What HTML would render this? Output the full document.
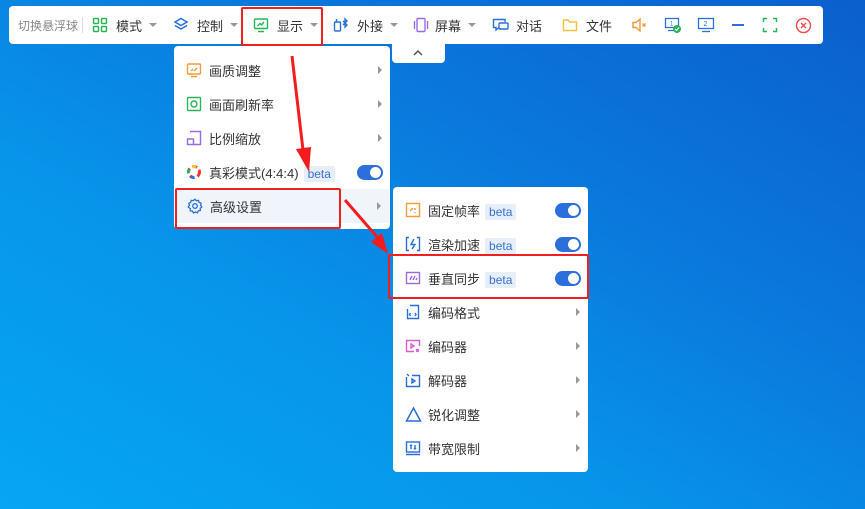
<!DOCTYPE html>
<html><head><meta charset="utf-8"><style>
*{margin:0;padding:0;box-sizing:border-box}
body{width:865px;height:509px;overflow:hidden;position:relative;font-family:"Liberation Sans","Noto Sans CJK SC",sans-serif;background:linear-gradient(30deg,#06a6f4 0%,#0795ea 35%,#0a78dc 65%,#0b5fcd 100%);}
.abs{position:absolute}
.tb{left:9px;top:6px;width:814px;height:38px;background:#fff;border-radius:4px;}
.ti{position:absolute;top:0;height:38px;display:flex;align-items:center;font-size:13px;color:#333;white-space:nowrap}
.car{display:inline-block;width:0;height:0;border-left:4px solid transparent;border-right:4px solid transparent;border-top:4px solid #999;margin-left:7px}
.menu{background:#fff;border-radius:4px}
.row{position:absolute;left:0;right:0;height:34px;display:flex;align-items:center;font-size:13px;color:#333}
.row svg{position:absolute;left:12px}
.row span.t{position:absolute;left:35px}
.arr{position:absolute;right:8px;width:0;height:0;border-top:4px solid transparent;border-bottom:4px solid transparent;border-left:4px solid #999}
.beta{display:inline-block;background:#e6eefa;color:#3a6fd0;font-size:12px;padding:1px 4px;margin-left:5px;border-radius:2px;line-height:14px}
.tg{position:absolute;right:7px;width:26px;height:15px;border-radius:8px;background:#2a6fdb}
.tg:after{content:"";position:absolute;right:2px;top:2px;width:11px;height:11px;border-radius:50%;background:#fff}
.red{position:absolute;border:2px solid #f02020;border-radius:2px}
</style></head><body>
<div class="abs tb">
 <div class="ti" style="left:9px;color:#888;font-size:12px">切换悬浮球</div>
 <div class="abs" style="left:73px;top:11px;width:1px;height:16px;background:#ddd"></div>
 <div class="ti" style="left:83px"><svg width="16" height="16" viewBox="0 0 16 16" fill="none" stroke="#2bb35a" stroke-width="1.5"><rect x="1.5" y="1.5" width="5" height="5" rx="1"/><rect x="9.5" y="1.5" width="5" height="5" rx="1"/><rect x="1.5" y="9.5" width="5" height="5" rx="1"/><rect x="9.5" y="9.5" width="5" height="5" rx="1"/></svg><span style="margin-left:8px">模式</span><i class="car"></i></div>
 <div class="ti" style="left:164px"><svg width="16" height="16" viewBox="0 0 16 16" fill="none" stroke="#2a6fdb" stroke-width="1.5"><path d="M8 1.5 14 5 8 8.5 2 5Z"/><path d="M2 8.5 8 12 14 8.5"/></svg><span style="margin-left:8px">控制</span><i class="car"></i></div>
 <div class="ti" style="left:244px"><svg width="16" height="16" viewBox="0 0 16 16" fill="none" stroke="#2bb35a" stroke-width="1.4"><rect x="1.5" y="2" width="13" height="9.5" rx="1"/><path d="M5 14.5h6M4.5 9 7 6.5 8.5 8 11 5"/></svg><span style="margin-left:8px">显示</span><i class="car"></i></div>
 <div class="ti" style="left:324px"><svg width="18" height="16" viewBox="0 0 18 16" fill="none" stroke="#2a6fdb" stroke-width="1.4"><rect x="1.5" y="5" width="6" height="9" rx="1"/><path d="M3.5 5V2M10 4l4 4-2 2V2l2 2-4 4"/></svg><span style="margin-left:6px">外接</span><i class="car"></i></div>
 <div class="ti" style="left:404px"><svg width="16" height="16" viewBox="0 0 16 16" fill="none" stroke="#9a6ce0" stroke-width="1.4"><rect x="4" y="1.5" width="8" height="13" rx="1"/><path d="M1.5 4v8M14.5 4v8"/></svg><span style="margin-left:6px">屏幕</span><i class="car"></i></div>
 <div class="ti" style="left:483px"><svg width="18" height="16" viewBox="0 0 18 16" fill="none" stroke="#2a6fdb" stroke-width="1.4"><path d="M13 5V2.5H1.5v8H4v2.5l3-2.5"/><rect x="7" y="6" width="9" height="6" rx="1"/></svg><span style="margin-left:6px">对话</span></div>
 <div class="ti" style="left:553px"><svg width="16" height="16" viewBox="0 0 16 16" fill="none" stroke="#f3c43a" stroke-width="1.4"><path d="M1.5 3h4.5l1.5 2h7v8.5h-13Z"/></svg><span style="margin-left:8px">文件</span></div>
 <div class="ti" style="left:622px"><svg width="18" height="16" viewBox="0 0 18 16" fill="none" stroke="#f39a3a" stroke-width="1.4"><path d="M2 5.5h3l4-3.5v12l-4-3.5H2Z"/><path d="M11.5 6.5l3 3M14.5 6.5l-3 3"/></svg></div>
 <div class="ti" style="left:655px"><svg width="18" height="18" viewBox="0 0 18 18" fill="none"><rect x="1.5" y="2.5" width="13" height="9" stroke="#2a6fdb" stroke-width="1.3"/><path d="M4 14.5h6" stroke="#2a6fdb" stroke-width="1.3"/><text x="6" y="9.5" font-size="6" fill="#2a6fdb">1</text><circle cx="13" cy="13" r="4" fill="#2bb35a"/><path d="M11 13l1.5 1.5 2.5-3" stroke="#fff" stroke-width="1.2"/></svg></div>
 <div class="ti" style="left:688px"><svg width="18" height="18" viewBox="0 0 18 18" fill="none"><rect x="1.5" y="2.5" width="15" height="10" stroke="#2a6fdb" stroke-width="1.3"/><path d="M5 15.5h8" stroke="#2a6fdb" stroke-width="1.3"/><text x="6.5" y="10" font-size="7" fill="#2a6fdb">2</text></svg></div>
 <div class="abs" style="left:723px;top:18px;width:12px;height:2px;background:#2a6fdb"></div>
 <div class="ti" style="left:753px"><svg width="16" height="16" viewBox="0 0 16 16" fill="none" stroke="#2bb35a" stroke-width="1.5"><path d="M1.5 5V1.5H5M11 1.5h3.5V5M14.5 11v3.5H11M5 14.5H1.5V11"/></svg></div>
 <div class="ti" style="left:786px"><svg width="17" height="17" viewBox="0 0 17 17" fill="none" stroke="#ef4b4b" stroke-width="1.4"><circle cx="8.5" cy="8.5" r="7"/><path d="M6 6l5 5M11 6l-5 5"/></svg></div>
</div>
<div class="red" style="left:241px;top:7px;width:82px;height:39px"></div>
<div class="abs" style="left:392px;top:44px;width:53px;height:19px;background:#fff;border-radius:0 0 4px 4px"><svg style="position:absolute;left:20px;top:5px" width="12" height="8" viewBox="0 0 12 8" fill="none" stroke="#555" stroke-width="1.5"><path d="M2 6l4-4 4 4"/></svg></div>

<div class="abs menu" style="left:174px;top:46px;width:216px;height:183px">
 <div class="row" style="top:7px"><svg width="16" height="16" viewBox="0 0 16 16" fill="none" stroke="#f39a3a" stroke-width="1.4"><rect x="1.5" y="2" width="13" height="10" rx="1"/><path d="M5 14.5h6M5 9l2-2M8 9l3-3"/></svg><span class="t">画质调整</span><i class="arr"></i></div>
 <div class="row" style="top:41px"><svg width="16" height="16" viewBox="0 0 16 16" fill="none" stroke="#2bb35a" stroke-width="1.4"><rect x="1.5" y="1.5" width="13" height="13" rx="1"/><circle cx="8" cy="8" r="3"/></svg><span class="t">画面刷新率</span><i class="arr"></i></div>
 <div class="row" style="top:75px"><svg width="16" height="16" viewBox="0 0 16 16" fill="none" stroke="#9a6ce0" stroke-width="1.4"><path d="M4 1.5h10.5v13H4M1.5 9h6v5.5h-6Z"/></svg><span class="t">比例缩放</span><i class="arr"></i></div>
 <div class="row" style="top:109px"><svg width="16" height="16" viewBox="0 0 16 16" fill="none" stroke-width="3"><circle cx="8" cy="8" r="5.5" stroke="#f33" stroke-dasharray="5 3"/><circle cx="8" cy="8" r="5.5" stroke="#2a6fdb" stroke-dasharray="4 30" stroke-dashoffset="-8"/><circle cx="8" cy="8" r="5.5" stroke="#2bb35a" stroke-dasharray="4 30" stroke-dashoffset="-16"/><circle cx="8" cy="8" r="5.5" stroke="#f3c43a" stroke-dasharray="4 30" stroke-dashoffset="-24"/></svg><span class="t">真彩模式(4:4:4)<span class="beta">beta</span></span><i class="tg"></i></div>
 <div class="row" style="top:143px;left:1px;right:1px;background:#f0f4fb"><svg width="16" height="16" viewBox="0 0 16 16" fill="none" stroke="#2a6fdb" stroke-width="1.3"><path d="M8 1.2l1.4 1.6 2.1-.4.6 2 2 .8-.5 2.1 1.2 1.7-1.6 1.4.2 2.1-2.1.4-.9 1.9-2-.8-1.9.9-1.1-1.8-2.1-.2.1-2.1L1.2 9l1.3-1.7-.7-2 1.9-.9.4-2.1 2.1.3Z"/><circle cx="8" cy="8" r="2.3"/></svg><span class="t">高级设置</span><i class="arr"></i></div>
</div>
<div class="red" style="left:175px;top:188px;width:166px;height:41px"></div>

<div class="abs menu" style="left:393px;top:187px;width:195px;height:285px">
 <div class="row" style="top:6px"><svg width="16" height="16" viewBox="0 0 16 16" fill="none" stroke="#f39a3a" stroke-width="1.4"><rect x="1.5" y="1.5" width="13" height="13"/><path d="M5 9l3-3M10 6v2M10 10v1"/></svg><span class="t">固定帧率<span class="beta">beta</span></span><i class="tg"></i></div>
 <div class="row" style="top:40px"><svg width="16" height="16" viewBox="0 0 16 16" fill="none" stroke="#2a6fdb" stroke-width="1.4"><path d="M4 1.5H1.5v13H4M12 1.5h2.5v13H12M9 3L6 8.5h4L7 13"/></svg><span class="t">渲染加速<span class="beta">beta</span></span><i class="tg"></i></div>
 <div class="row" style="top:74px"><svg width="16" height="16" viewBox="0 0 16 16" fill="none" stroke="#9a6ce0" stroke-width="1.4"><rect x="1.5" y="2.5" width="13" height="11"/><path d="M5 10l2-4M8 10l2-4M11 10l1-2"/></svg><span class="t">垂直同步<span class="beta">beta</span></span><i class="tg"></i></div>
 <div class="row" style="top:108px"><svg width="16" height="16" viewBox="0 0 16 16" fill="none" stroke="#2a6fdb" stroke-width="1.4"><path d="M5 1.5h8.5v13h-11V5M5.5 9l-1 1.5 1 1.5M10 9l1 1.5-1 1.5"/></svg><span class="t">编码格式</span><i class="arr"></i></div>
 <div class="row" style="top:142px"><svg width="16" height="16" viewBox="0 0 16 16" fill="none" stroke="#e05ad0" stroke-width="1.4"><path d="M14.5 8V2.5h-13v11H9"/><path d="M6 6l3 2-3 2Z"/><circle cx="12.5" cy="12.5" r="1"/></svg><span class="t">编码器</span><i class="arr"></i></div>
 <div class="row" style="top:176px"><svg width="16" height="16" viewBox="0 0 16 16" fill="none" stroke="#2a6fdb" stroke-width="1.4"><path d="M1.5 5v9.5h13v-11H7M2 2l2 2"/><path d="M7 7l3 2-3 2Z"/></svg><span class="t">解码器</span><i class="arr"></i></div>
 <div class="row" style="top:210px"><svg width="17" height="17" viewBox="0 0 17 17" fill="none" stroke="#2a6fdb" stroke-width="1.5"><path d="M8.5 2 15.5 15h-14Z"/></svg><span class="t">锐化调整</span><i class="arr"></i></div>
 <div class="row" style="top:244px"><svg width="16" height="16" viewBox="0 0 16 16" fill="none" stroke="#2a6fdb" stroke-width="1.4"><rect x="1.5" y="2" width="13" height="10"/><path d="M1 14.5h14M6 5v4M5 6l1-1 1 1M10 5v4M9 8l1 1 1-1"/></svg><span class="t">带宽限制</span><i class="arr"></i></div>
</div>
<div class="red" style="left:388px;top:254px;width:201px;height:45px"></div>

<svg class="abs" style="left:0;top:0" width="865" height="509">
 <path d="M292 56 L303 150" stroke="#f41c1c" stroke-width="3"/>
 <path d="M296 149 L309 172 L311 147Z" fill="#f41c1c"/>
 <path d="M345 200 L378 238" stroke="#f41c1c" stroke-width="3"/>
 <path d="M371 242 L388 254 L382 233Z" fill="#f41c1c"/>
</svg>
</body></html>
